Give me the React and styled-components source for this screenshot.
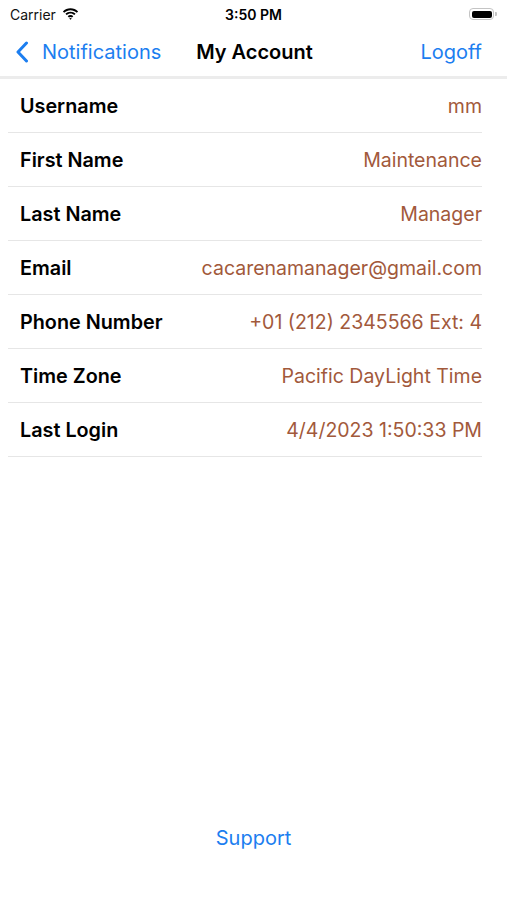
import React from 'react';
import styled, { createGlobalStyle } from 'styled-components';

const GlobalStyle = createGlobalStyle`
  html, body {
    margin: 0;
    padding: 0;
    background: #fff;
  }
  body {
    font-family: Inter, "Noto Sans", sans-serif;
    -webkit-font-smoothing: antialiased;
  }
`;

const account = [
  { label: 'Username', value: 'mm' },
  { label: 'First Name', value: 'Maintenance' },
  { label: 'Last Name', value: 'Manager' },
  { label: 'Email', value: 'cacarenamanager@gmail.com' },
  { label: 'Phone Number', value: '+01 (212) 2345566 Ext: 4' },
  { label: 'Time Zone', value: 'Pacific DayLight Time' },
  { label: 'Last Login', value: '4/4/2023 1:50:33 PM' },
];

function WifiIcon() {
  return (
    <svg width="17" height="12" viewBox="0 0 17 12">
      <path d="M8.5 2.2c2.4 0 4.6.9 6.3 2.5l1.3-1.3C14.1 1.4 11.4.3 8.5.3S2.9 1.4.9 3.4l1.3 1.3C3.9 3.1 6.1 2.2 8.5 2.2z" fill="#000" />
      <path d="M8.5 5.6c1.5 0 2.8.6 3.8 1.5l1.3-1.3C12.3 4.5 10.5 3.7 8.5 3.7S4.7 4.5 3.4 5.8l1.3 1.3c1-.9 2.3-1.5 3.8-1.5z" fill="#000" />
      <path d="M8.5 8.9c.6 0 1.1.2 1.5.6l1.3-1.3C10.6 7.5 9.6 7.1 8.5 7.1s-2.1.4-2.8 1.1L7 9.5c.4-.4.9-.6 1.5-.6zM8.5 11.7 9.8 10.4c-.4-.3-.8-.5-1.3-.5s-.9.2-1.3.5z" fill="#000" />
    </svg>
  );
}

function BackChevron() {
  return (
    <svg width="14" height="22" viewBox="0 0 14 22">
      <path d="M11.5 2 3 11l8.5 9" fill="none" stroke="#1c7ef0" strokeWidth="3" strokeLinecap="round" strokeLinejoin="round" />
    </svg>
  );
}

export default function App() {
  return (
    <Screen>
      <GlobalStyle />
      <StatusBar>
        <Carrier>
          Carrier
          <WifiIcon />
        </Carrier>
        <Clock>3:50 PM</Clock>
        <Battery>
          <BatteryBody>
            <BatteryFill />
          </BatteryBody>
          <BatteryCap />
        </Battery>
      </StatusBar>

      <NavBar>
        <BackButton>
          <BackChevron />
          Notifications
        </BackButton>
        <NavTitle>My Account</NavTitle>
        <NavAction>Logoff</NavAction>
      </NavBar>

      <List>
        {account.map(item => (
          <Row key={item.label}>
            <Label>{item.label}</Label>
            <Value>{item.value}</Value>
          </Row>
        ))}
      </List>

      <Footer>
        <LinkButton>Support</LinkButton>
      </Footer>
    </Screen>
  );
}

const Screen = styled.div`
  width: 507px;
  height: 900px;
  display: flex;
  flex-direction: column;
  background: #fff;
  overflow: hidden;
`;

const StatusBar = styled.div`
  height: 28px;
  display: grid;
  grid-template-columns: 1fr auto 1fr;
  align-items: center;
  padding: 0 10px;
`;

const Carrier = styled.div`
  display: flex;
  align-items: center;
  gap: 6px;
  font-size: 14px;
  color: #111;
`;

const Clock = styled.div`
  font-size: 14px;
  font-weight: 600;
  color: #000;
`;

const Battery = styled.div`
  justify-self: end;
  display: flex;
  align-items: center;
  gap: 1px;
`;

const BatteryBody = styled.div`
  width: 25px;
  height: 12px;
  border: 1.5px solid #c4c4c4;
  border-radius: 4px;
  padding: 1.5px;
  box-sizing: border-box;
`;

const BatteryFill = styled.div`
  width: 100%;
  height: 100%;
  background: #000;
  border-radius: 2px;
`;

const BatteryCap = styled.div`
  width: 2px;
  height: 4px;
  background: #c4c4c4;
  border-radius: 0 1px 1px 0;
`;

const NavBar = styled.div`
  height: 48px;
  display: grid;
  grid-template-columns: 1fr auto 1fr;
  align-items: center;
  padding: 0 25px 0 15px;
  border-bottom: 3px solid #ececec;
`;

const BackButton = styled.div`
  display: flex;
  align-items: center;
  gap: 13px;
  font-size: 20px;
  color: #1c7ef0;
`;

const NavTitle = styled.div`
  font-size: 20px;
  font-weight: 600;
  color: #000;
  margin-left: 12px;
`;

const NavAction = styled.div`
  justify-self: end;
  font-size: 20px;
  color: #1c7ef0;
`;

const List = styled.div`
  display: flex;
  flex-direction: column;
  padding: 0 25px 0 8px;
`;

const Row = styled.div`
  height: 53px;
  display: flex;
  align-items: center;
  justify-content: space-between;
  padding-left: 12px;
  border-bottom: 1px solid #e6e6e6;
`;

const Label = styled.div`
  font-size: 19.8px;
  font-weight: 600;
  color: #000;
`;

const Value = styled.div`
  font-size: 19.5px;
  color: #a2593b;
`;

const Footer = styled.div`
  flex: 1;
  display: flex;
  align-items: flex-end;
  justify-content: center;
  padding-bottom: 50px;
`;

const LinkButton = styled.div`
  font-size: 20px;
  color: #1c7ef0;
`;
